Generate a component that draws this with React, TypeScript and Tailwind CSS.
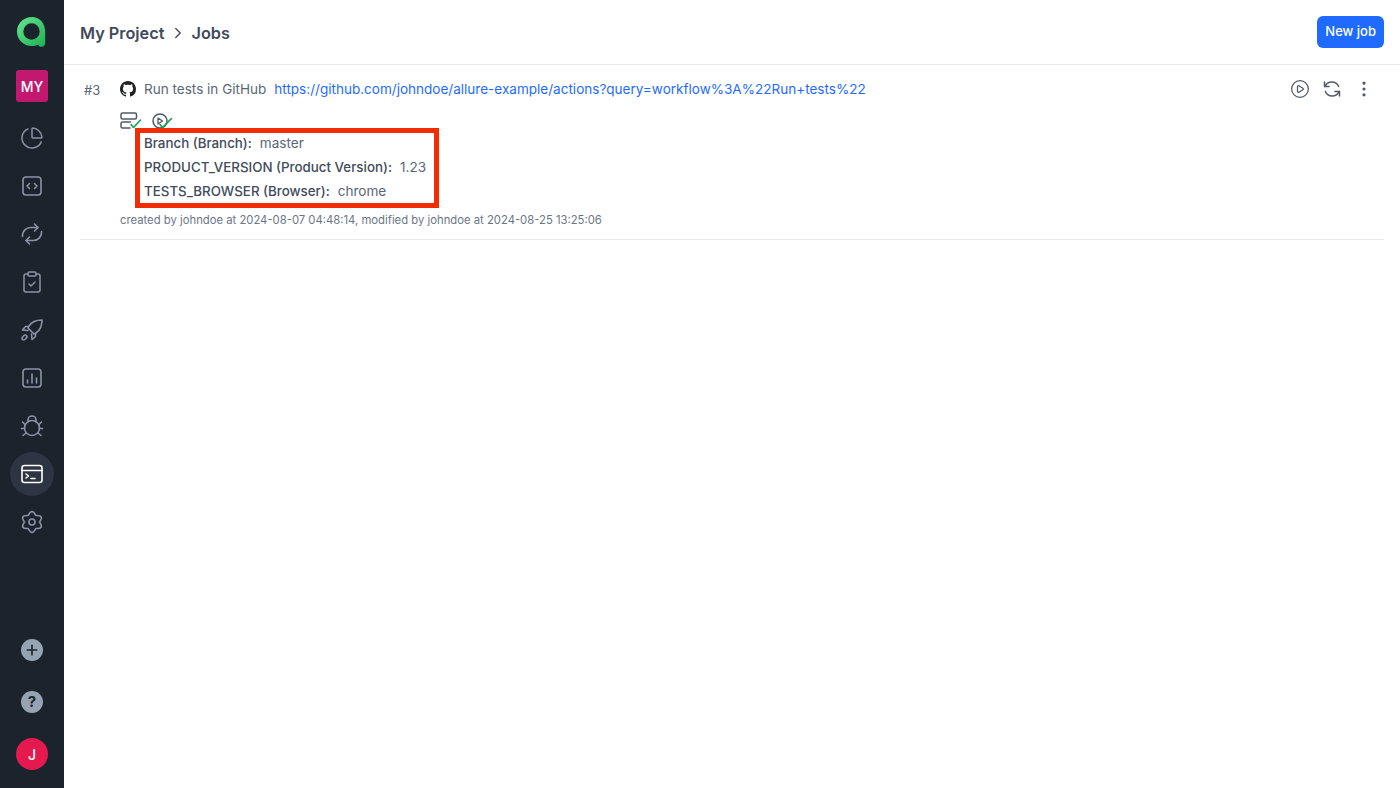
import {
  ChartPie,
  ClipboardCheck,
  EllipsisVertical,
  ChevronRight,
  CirclePlay,
  Plus,
} from 'lucide-react'
import type { ReactNode } from 'react'

const font = { fontFamily: 'Inter, "Noto Sans", sans-serif' }

const NavIcon = ({ children, active }: { children: ReactNode; active?: boolean }) => (
  <div className={`flex h-11 w-11 items-center justify-center rounded-full ${active ? 'bg-[#2d3542] text-white' : 'text-[#8a94a3]'}`}>
    {children}
  </div>
)

const Logo = () => (
  <svg width="32" height="32" viewBox="0 0 34 34" fill="none">
    <defs>
      <linearGradient id="logoGrad" x1="4" y1="4" x2="30" y2="30" gradientUnits="userSpaceOnUse">
        <stop offset="0" stopColor="#5fe08a" />
        <stop offset="1" stopColor="#22b455" />
      </linearGradient>
    </defs>
    <path
      d="M17 1C8 1 1 8 1 16.500S8 32 17 32c2.500 0 4.500-.5 6.500-1.500.5 1.200 1.700 2.200 3.500 2.200 2.500 0 4-1.700 4-4V16.500C31 8 25.500 1 17 1Z"
      fill="url(#logoGrad)"
    />
    <circle cx="16.500" cy="16.500" r="8.700" fill="#1b232d" />
  </svg>
)

const Line = ({ size = 24, width = 1.6, children }: { size?: number; width?: number; children: ReactNode }) => (
  <svg width={size} height={size} viewBox="0 0 24 24" fill="none" stroke="currentColor" strokeWidth={width} strokeLinecap="round" strokeLinejoin="round">
    {children}
  </svg>
)

const TerminalIcon = () => (
  <Line>
    <rect x="2" y="3.500" width="20" height="17" rx="2.500" />
    <path d="M2 8.500h20" />
    <path d="m6 12 2.500 2L6 16" />
    <path d="M11 16.500h4" />
  </Line>
)

const CodeBoxIcon = () => (
  <Line>
    <rect x="3" y="3" width="18" height="18" rx="3" />
    <path d="m9.500 9.500-2.500 2.500 2.500 2.500" />
    <path d="m14.500 9.500 2.500 2.500-2.500 2.500" />
  </Line>
)

const ReportIcon = () => (
  <Line>
    <rect x="3" y="3" width="18" height="18" rx="3" />
    <path d="M7.500 17v-3M12 17V8M16.500 17v-5" />
  </Line>
)

const SyncIcon = () => (
  <Line>
    <path d="M2.500 14.500v-1a8 8 0 0 1 8-8H18" />
    <path d="m14.500 2 3.500 3.500-3.500 3.500" />
    <path d="M21.500 9.500v1a8 8 0 0 1-8 8H6" />
    <path d="M9.500 15 6 18.500 9.500 22" />
  </Line>
)

const RefreshIcon = () => (
  <Line size={20} width={1.8}>
    <path d="M3 3.500v5.500h5.500" />
    <path d="M3.500 9a9 9 0 0 1 16.500 0" />
    <path d="M21 20.500V15h-5.500" />
    <path d="M20.500 15a9 9 0 0 1-16.500 0" />
  </Line>
)

const RocketIcon = () => (
  <Line>
    <path d="M22 2c-6 0-10.500 2-13 6l-1 2 6 6 2-1c4-2.500 6-7 6-13Z" />
    <path d="M8.500 8.500h-3L2.500 12l5.500.5" />
    <path d="M15.500 15.500v3L12 21.500l-.5-5.500" />
    <ellipse cx="4.500" cy="19.500" rx="2.800" ry="1.800" transform="rotate(-45 4.500 19.500)" />
  </Line>
)

const BugIcon = () => (
  <Line>
    <ellipse cx="12" cy="14" rx="7.500" ry="7.500" />
    <path d="M8 8V6a4 4 0 0 1 8 0v2" />
    <path d="M5 10.500 2.500 8M19 10.500 21.500 8M4.500 14.500H1.500M19.500 14.500h3M6 19l-3 2.500M18 19l3 2.500" />
  </Line>
)

const GearIcon = () => (
  <Line>
    <path d="M8.250 5.500Q12-2.500 15.750 5.500Q24.600 4.750 19.500 12Q24.600 19.250 15.750 18.500Q12 26.500 8.250 18.500Q-.6 19.250 4.500 12Q-.6 4.750 8.250 5.500Z" />
    <circle cx="12" cy="12" r="3" />
  </Line>
)

const GithubIcon = () => (
  <svg width="16" height="16" viewBox="0 0 16 16" fill="#1f2328">
    <path d="M8 0C3.580 0 0 3.580 0 8c0 3.540 2.290 6.530 5.470 7.590.4.070.55-.17.55-.38 0-.19-.01-.82-.01-1.490-2.010.37-2.530-.49-2.690-.94-.09-.23-.48-.94-.82-1.130-.28-.15-.68-.52-.01-.53.630-.01 1.080.58 1.230.82.720 1.210 1.870.87 2.330.66.070-.52.280-.87.510-1.070-1.780-.2-3.640-.89-3.640-3.950 0-.87.310-1.590.82-2.150-.08-.2-.36-1.020.08-2.120 0 0 .67-.21 2.200.82.640-.18 1.320-.27 2-.27s1.360.09 2 .27c1.530-1.040 2.200-.82 2.200-.82.440 1.100.16 1.920.08 2.120.51.560.82 1.270.82 2.150 0 3.070-1.870 3.750-3.650 3.950.29.25.54.73.54 1.480 0 1.070-.01 1.930-.01 2.200 0 .21.150.46.550.38A8.010 8.010 0 0 0 16 8c0-4.420-3.580-8-8-8Z" />
  </svg>
)

const ServerCheckIcon = () => (
  <svg width="22" height="18" viewBox="0 0 22 18" fill="none" strokeLinecap="round" strokeLinejoin="round">
    <g stroke="#4f5a69" strokeWidth="1.500">
      <rect x="1" y="1" width="15.500" height="6" rx="1.500" />
      <path d="M10 16H2.500A1.500 1.500 0 0 1 1 14.500v-3A1.500 1.500 0 0 1 2.500 10h8" />
    </g>
    <path d="m11 12.500 2.500 3L20.500 8" stroke="#16a34a" strokeWidth="1.600" />
  </svg>
)

const PlayCheckIcon = () => (
  <svg width="22" height="18" viewBox="0 0 22 18" fill="none" strokeLinecap="round" strokeLinejoin="round">
    <circle cx="8" cy="9" r="7" stroke="#4f5a69" strokeWidth="1.500" />
    <path d="M6 6v6l4.500-3L6 6Z" stroke="#4f5a69" strokeWidth="1.300" />
    <path d="m8 12.500 2.500 3L19.500 6.500" stroke="#16a34a" strokeWidth="1.600" />
  </svg>
)

const Param = ({ name, value }: { name: string; value: string }) => (
  <div className="flex h-6 items-center gap-2 whitespace-nowrap">
    <span className="text-[13.35px] font-medium text-[#414b5a]">{name}:</span>
    <span className="text-[13.55px] text-[#5b6675]">{value}</span>
  </div>
)

const Sidebar = () => (
  <aside className="flex h-full w-16 shrink-0 flex-col items-center bg-[#1b232d] pt-[16px] pb-[18px]">
    <Logo />
    <div className="mt-[22px] mb-[14px] flex h-8 w-8 items-center justify-center rounded-[3px] bg-[#c2186f] text-[14px] font-medium text-white">
      MY
    </div>
    <div className="flex flex-col items-center gap-1">
      <NavIcon><ChartPie size={24} strokeWidth={1.500} /></NavIcon>
      <NavIcon><CodeBoxIcon /></NavIcon>
      <NavIcon><SyncIcon /></NavIcon>
      <NavIcon><ClipboardCheck size={24} strokeWidth={1.500} /></NavIcon>
      <NavIcon><RocketIcon /></NavIcon>
      <NavIcon><ReportIcon /></NavIcon>
      <NavIcon><BugIcon /></NavIcon>
      <NavIcon active><TerminalIcon /></NavIcon>
      <NavIcon><GearIcon /></NavIcon>
    </div>
    <div className="mt-auto flex flex-col items-center">
      <div className="flex h-[22px] w-[22px] items-center justify-center rounded-full bg-[#97a3b2] text-[#1b232d]">
        <Plus size={16} strokeWidth={2.500} />
      </div>
      <div className="mt-[30px] flex h-[22px] w-[22px] items-center justify-center rounded-full bg-[#97a3b2] text-[15px] font-bold text-[#1b232d]">
        ?
      </div>
      <div className="mt-[25px] flex h-8 w-8 items-center justify-center rounded-full bg-[#e6194f] text-[14px] font-medium text-white">
        J
      </div>
    </div>
  </aside>
)

export default function App() {
  return (
    <div className="flex h-[788px] w-full overflow-hidden bg-white" style={font}>
      <Sidebar />
      <main className="flex min-w-0 flex-1 flex-col">
        <header className="flex h-[65px] shrink-0 items-center justify-between border-b border-[#e7ebf0] pr-4 pl-4">
          <div className="flex items-center gap-[4.5px] pt-[2px] text-[16.3px] font-semibold text-[#414b5a]">
            <span>My Project</span>
            <ChevronRight size={18} strokeWidth={1.800} />
            <span>Jobs</span>
          </div>
          <button className="h-8 rounded-[6px] bg-[#1f6bff] px-2 text-[13px] font-medium text-white">New job</button>
        </header>

        <section className="mr-4 ml-4 flex h-[175px] border-b border-[#e7ebf0]">
          <div className="w-10 shrink-0 pt-[17px] pl-1 text-[13px] leading-4 text-[#5b6675]">#3</div>
          <div className="min-w-0 flex-1 pt-[16px]">
            <div className="flex h-4 items-center text-[13.54px]">
              <GithubIcon />
              <span className="ml-2 pt-[1px] text-[#5b6675]">Run tests in GitHub</span>
              <a className="ml-2 pt-[1px] text-[#1f6bff]">https://github.com/johndoe/allure-example/actions?query=workflow%3A%22Run+tests%22</a>
              <div className="ml-auto flex items-center gap-[12px] pr-[10px] text-[#4f5a69]">
                <CirclePlay size={20} strokeWidth={1.500} />
                <RefreshIcon />
                <EllipsisVertical size={20} strokeWidth={1.800} />
              </div>
            </div>
            <div className="mt-[15px] flex h-[18px] items-center gap-[10px]">
              <ServerCheckIcon />
              <PlayCheckIcon />
            </div>
            <div className="relative mt-[1px] ml-6 w-fit">
              <Param name="Branch (Branch)" value="master" />
              <Param name="PRODUCT_VERSION (Product Version)" value="1.23" />
              <Param name="TESTS_BROWSER (Browser)" value="chrome" />
              <div className="absolute -top-[3px] -right-[13px] -bottom-[5px] -left-[9px] border-[5px] border-[#f42c04]" />
            </div>
            <div className="mt-[9px] text-[11.29px] leading-4 text-[#6b7685]">
              created by johndoe at 2024-08-07 04:48:14, modified by johndoe at 2024-08-25 13:25:06
            </div>
          </div>
        </section>
      </main>
    </div>
  )
}
